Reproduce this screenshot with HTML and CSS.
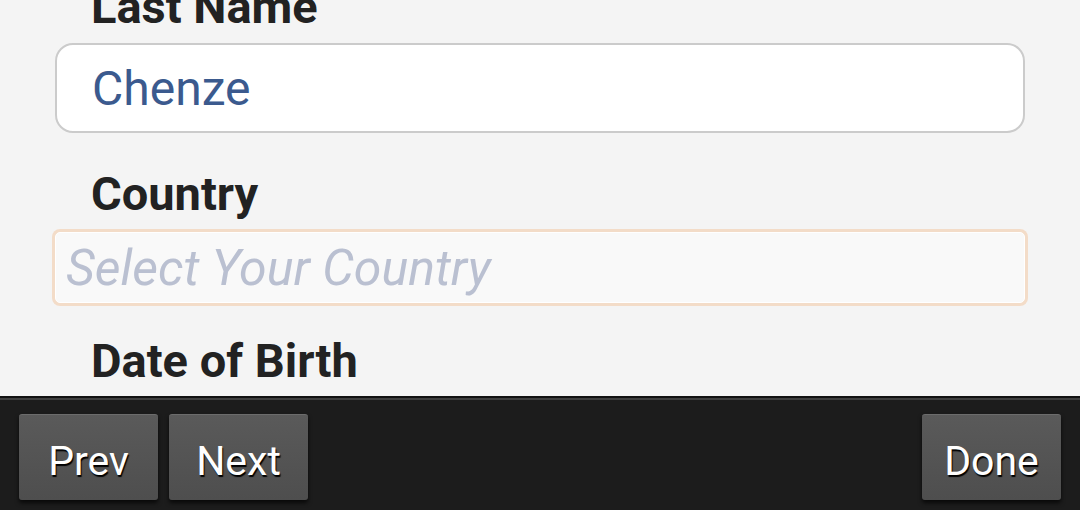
FILE: index.html
```html
<!DOCTYPE html>
<html lang="en">
  <head>
    <meta charset="UTF-8" />
    <meta name="viewport" content="width=device-width, initial-scale=1.0" />
    <title>Profile</title>
    <link rel="stylesheet" href="styles.css">
  </head>
  <body>
    <div class="screen">
      <div class="form-scroll">
        <form class="form">
          <label class="field-label" for="last-name">Last Name</label>
          <input type="text" id="last-name" class="text-input" value="Chenze" />

          <label class="field-label label-country" for="country">Country</label>
          <input
            type="text"
            id="country"
            class="select-input"
            placeholder="Select Your Country"
          />

          <label class="field-label label-dob" for="dob">Date of Birth</label>
        </form>
      </div>

      <div class="keyboard-bar">
        <button class="bar-button" type="button">Prev</button>
        <button class="bar-button" type="button">Next</button>
        <span class="spacer"></span>
        <button class="bar-button" type="button">Done</button>
      </div>
    </div>
  </body>
</html>
```

FILE: styles.css
```css
html,
body {
  margin: 0;
  padding: 0;
}
body {
  font-family: Roboto, "Noto Sans", sans-serif;
  background-color: #f4f4f4;
}
.screen {
  display: flex;
  flex-direction: column;
  width: 1080px;
  height: 510px;
  overflow: hidden;
}
.form-scroll {
  flex: 1;
  overflow: hidden;
}
/* page is scrolled: the first label is cut at the top */
.form {
  display: flex;
  flex-direction: column;
  align-items: stretch;
  padding: 0 55px;
  margin-top: -19px;
}
.field-label {
  display: block;
  font-size: 47px;
  font-weight: bold;
  line-height: 52px;
  color: #222;
  padding-left: 36px;
  margin-bottom: 10px;
}
.label-country {
  margin-top: 35px;
}
.label-dob {
  margin-top: 32px;
}
.text-input {
  box-sizing: border-box;
  height: 90px;
  border: 2px solid #cbcbcb;
  border-radius: 18px;
  background-color: #fff;
  padding: 0 35px;
  font-family: Roboto, sans-serif;
  font-size: 48px;
  color: #3b5a8e;
  outline: none;
}
.select-input {
  box-sizing: border-box;
  height: 71px;
  margin-top: 2px;
  border: 1px solid #fff;
  border-radius: 5px;
  background-color: #f9f9f9;
  box-shadow: 0 0 0 3px #f3dcc8;
  padding: 0 10px;
  font-family: Roboto, sans-serif;
  font-size: 50px;
  outline: none;
}
.select-input::placeholder {
  color: #bac0d1;
  font-style: italic;
}
.keyboard-bar {
  flex: none;
  display: flex;
  align-items: flex-start;
  gap: 11px;
  height: 114px;
  box-sizing: border-box;
  padding: 16px 19px 0;
  background-color: #1c1c1c;
  border-top: 2px solid #111;
  box-shadow: inset 0 2px 0 #3f3f3f;
}
.spacer {
  flex: 1;
}
.bar-button {
  width: 139px;
  height: 86px;
  border: none;
  border-top: 1px solid #6c6c6c;
  border-radius: 3px;
  background: linear-gradient(#5a5a5a, #4e4e4e);
  box-shadow: 0 3px 4px rgba(0, 0, 0, 0.7);
  color: #fff;
  font-family: Roboto, sans-serif;
  font-size: 41px;
  text-shadow: 1px 2px 1px #000;
  padding: 6px 0 0;
}
```
